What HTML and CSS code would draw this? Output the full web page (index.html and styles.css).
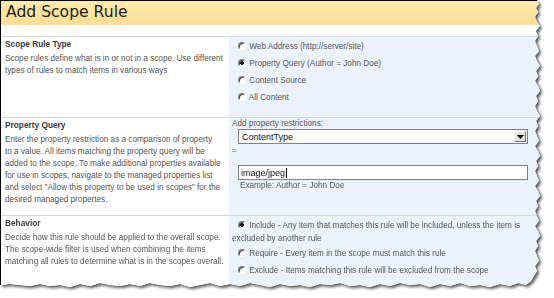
FILE: index.html
```
<!DOCTYPE html>
<html>
<head>
<meta charset="utf-8">
<link rel="stylesheet" href="styles.css">
</head>
<body>
<div class="shadow">
  <div class="paper">
    <div class="page-title">Add Scope Rule</div>
    <div class="gap"></div>
    <div class="section sec-type">
      <div class="info">
        <div class="info-title">Scope Rule Type</div>
        <div class="info-desc">Scope rules define what is in or not in a scope. Use different<br>types of rules to match items in various ways</div>
      </div>
      <div class="ctrl">
        <label class="opt"><input type="radio" name="t"> Web Address (http://server/site)</label>
        <label class="opt"><input type="radio" name="t" checked> Property Query (Author = John Doe)</label>
        <label class="opt"><input type="radio" name="t"> Content Source</label>
        <label class="opt"><input type="radio" name="t"> All Content</label>
      </div>
    </div>
    <div class="section sec-query">
      <div class="info">
        <div class="info-title">Property Query</div>
        <div class="info-desc">Enter the property restriction as a comparison of property<br>to a value. All items matching the property query will be<br>added to the scope. To make additional properties available<br>for use in scopes, navigate to the managed properties list<br>and select "Allow this property to be used in scopes" for the<br>desired managed propertes.</div>
      </div>
      <div class="ctrl">
        <div class="lbl">Add property restrictions:</div>
        <div class="select"><span class="sel-text">ContentType</span><span class="sel-btn"><svg width="7" height="4" viewBox="0 0 7 4"><path d="M0 0h7L3.5 4z" fill="#000"/></svg></span></div>
        <div class="eq">=</div>
        <div class="textbox"><span>image/jpeg</span><span class="caret"></span></div>
        <div class="example">Example: Author = John Doe</div>
      </div>
    </div>
    <div class="section sec-behavior">
      <div class="info">
        <div class="info-title">Behavior</div>
        <div class="info-desc">Decide how this rule should be applied to the overall scope.<br>The scope-wide filter is used when combining the items<br>matching all rules to determine what is in the scopes overall.</div>
      </div>
      <div class="ctrl">
        <label class="opt first"><input type="radio" name="b" checked> Include - Any item that matches this rule will be included, unless the item is<br>excluded by another rule</label>
        <label class="opt"><input type="radio" name="b"> Require - Every item in the scope must match this rule</label>
        <label class="opt"><input type="radio" name="b"> Exclude - Items matching this rule will be excluded from the scope</label>
      </div>
    </div>
  </div>
</div>
</body>
</html>
```
FILE: styles.css
```
html, body {
  margin: 0;
  padding: 0;
  background: #ffffff;
}
body {
  width: 554px;
  height: 298px;
  overflow: hidden;
  font-family: "Liberation Sans", Arial, sans-serif;
}
.shadow {
  filter: drop-shadow(2px 2px 1.5px rgba(0,0,0,0.65));
  width: 546px;
  height: 292px;
}
.paper {
  width: 545px;
  height: 292px;
  background: #ffffff;
  border-left: 1px solid #000;
  border-top: 1px solid #000;
  box-sizing: border-box;
  display: flex;
  flex-direction: column;
  clip-path: polygon(0 0, 537px 0, 539px 4px, 536px 8px, 538px 12px, 535px 17px, 537px 22px, 540px 26px, 536px 31px, 538px 36px, 535px 41px, 537px 46px, 539px 51px, 535px 56px, 537px 61px, 540px 66px, 536px 71px, 538px 76px, 535px 81px, 538px 86px, 540px 91px, 536px 96px, 538px 101px, 535px 106px, 537px 111px, 540px 116px, 536px 121px, 538px 126px, 535px 131px, 537px 136px, 539px 141px, 535px 146px, 538px 151px, 540px 156px, 536px 161px, 538px 166px, 535px 171px, 537px 176px, 539px 181px, 535px 186px, 538px 191px, 540px 196px, 536px 201px, 538px 206px, 535px 211px, 537px 216px, 539px 221px, 535px 226px, 538px 231px, 540px 236px, 536px 241px, 538px 246px, 535px 251px, 537px 256px, 539px 261px, 535px 266px, 537px 271px, 534px 276px, 531px 281px, 526px 285px, 518px 283px, 510px 286px, 500px 284px, 490px 287px, 480px 285px, 470px 286px, 460px 283px, 450px 286px, 440px 284px, 430px 287px, 420px 284px, 410px 285px, 400px 283px, 390px 286px, 380px 284px, 370px 287px, 360px 285px, 350px 286px, 340px 283px, 330px 285px, 320px 284px, 310px 287px, 300px 285px, 290px 286px, 280px 284px, 270px 287px, 260px 285px, 250px 283px, 240px 286px, 230px 284px, 220px 286px, 210px 283px, 200px 285px, 190px 287px, 180px 284px, 170px 286px, 160px 285px, 150px 283px, 140px 286px, 130px 284px, 120px 286px, 110px 285px, 100px 283px, 90px 286px, 80px 284px, 70px 287px, 60px 285px, 50px 286px, 40px 284px, 30px 286px, 20px 285px, 10px 284px, 0 285px);
}
.page-title {
  height: 24px;
  box-sizing: border-box;
  background: linear-gradient(#fdeaae, #fcdd95);
  font-family: "DejaVu Sans", Verdana, sans-serif;
  font-size: 15.6px;
  line-height: 23px;
  color: #1a1a1a;
  padding-left: 5px;
}
.gap {
  height: 11px;
}
.section {
  display: grid;
  grid-template-columns: 228px 1fr;
  border-top: 1px solid #d8d8d8;
}
.sec-type { height: 80px; }
.sec-query { height: 97px; }
.sec-behavior { flex: 1; }
.info {
  padding: 1px 4px 0 4px;
  background: #fff;
  min-width: 0;
}
.info-title {
  font-weight: bold;
  font-size: 8.3px;
  line-height: 12px;
  color: #3a3a3a;
}
.info-desc {
  margin-top: 3px;
  font-size: 8.2px;
  line-height: 12px;
  color: #555555;
  white-space: nowrap;
}
.ctrl {
  background: #ebf2fc;
  padding: 1px 8px 0 3px;
  font-size: 8.2px;
  line-height: 12px;
  color: #555555;
  white-space: nowrap;
}
.opt {
  display: block;
  height: 17px;
  line-height: 17px;
}
.opt input {
  appearance: none;
  -webkit-appearance: none;
  width: 8px;
  height: 8px;
  margin: 0 1px 0 6px;
  border-radius: 50%;
  border: 1px solid;
  border-color: #808080 #fff #fff #808080;
  background: #fff;
  box-shadow: inset 1px 1px 0 #404040;
  vertical-align: -1px;
}
.opt input:checked {
  background: radial-gradient(circle, #000 0 1.6px, #fff 2px);
}
.sec-behavior .ctrl { padding-top: 3px; }
.sec-behavior .opt.first {
  height: auto;
  line-height: 13px;
}
.lbl {
  line-height: 10px;
}
.select {
  width: 290px;
  height: 15px;
  margin-left: 6px;
  box-sizing: border-box;
  border: 1px solid #7f7f7f;
  background: #fff;
  display: flex;
  align-items: center;
  justify-content: space-between;
  padding-left: 3px;
  font-size: 9px;
  color: #111;
}
.sel-btn {
  width: 12px;
  height: 11px;
  margin-right: 1px;
  box-sizing: border-box;
  background: #e4e4e4;
  border: 1px solid;
  border-color: #fff #707070 #707070 #fff;
  display: flex;
  align-items: center;
  justify-content: center;
}
.eq {
  height: 21px;
  line-height: 14px;
}
.textbox {
  width: 290px;
  height: 15px;
  margin-left: 6px;
  box-sizing: border-box;
  border: 1px solid #7f7f7f;
  background: #fff;
  display: flex;
  align-items: center;
  padding-left: 2px;
  font-size: 9px;
  color: #111;
}
.caret {
  width: 1px;
  height: 10px;
  background: #000;
  margin-left: 1px;
}
.example {
  padding-left: 8px;
  line-height: 12px;
}
```
